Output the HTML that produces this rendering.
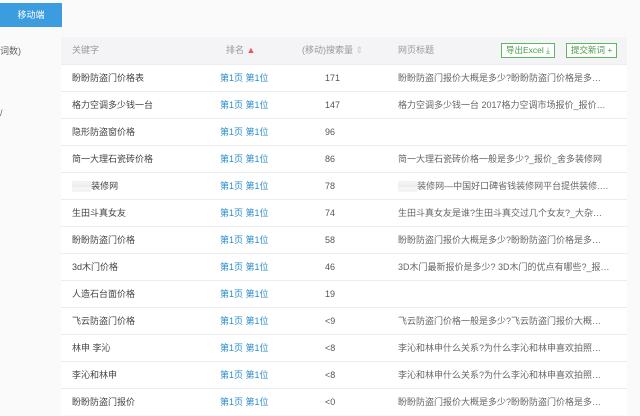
<!DOCTYPE html>
<html><head><meta charset="utf-8"><style>
*{margin:0;padding:0;box-sizing:border-box}
body{width:640px;height:416px;overflow:hidden;background:#fafafb;font-family:"Liberation Sans","Noto Sans CJK SC",sans-serif;font-size:9px;color:#555;position:relative}
.btn{position:absolute;left:0;top:3px;width:62px;height:24px;background:#3b9ce0;color:#fff;font-size:9px;line-height:24px;text-align:center}
.side{position:absolute;left:0;top:44px;font-size:9px;color:#666}
.tbl{position:absolute;left:61px;top:37px;width:566px;background:#fff}
.hd{height:27px;background:#f4f4f6;position:relative;color:#999}
.row{height:27px;border-top:1px solid #ececef;position:relative}
.c{position:absolute;top:0;line-height:27px;white-space:nowrap}
.k{left:11px;color:#444}.r{left:159px;color:#2d8ccc}.n{left:264px;color:#555}.t{left:337px;color:#666;width:212px;overflow:hidden;text-overflow:ellipsis}
.gb{position:absolute;top:6px;height:15px;border:1px solid #5cb85c;color:#4a9a4a;font-size:8.5px;line-height:13px;padding:0 4px;background:#fff}
</style></head><body>
<div class="btn">移动端</div>
<div class="side">词数)</div>
<div class="side" style="top:108px">/</div>
<div class="tbl">
<div class="hd"><span class="c k" style="color:#999">关键字</span><span class="c" style="left:165px">排名 <span style="color:#e55">▲</span></span><span class="c" style="left:241px">(移动)搜索量 <span style="color:#ccc">⇕</span></span><span class="c" style="left:337px">网页标题</span>
<span class="gb" style="left:440px">导出Excel ⤓</span><span class="gb" style="left:505px">提交新词 +</span></div>
<div class="row"><span class="c k">盼盼防盗门价格表</span><span class="c r">第1页 第1位</span><span class="c n">171</span><span class="c t">盼盼防盗门报价大概是多少?盼盼防盗门价格是多少_报价_装修</span></div>
<div class="row"><span class="c k">格力空调多少钱一台</span><span class="c r">第1页 第1位</span><span class="c n">147</span><span class="c t">格力空调多少钱一台 2017格力空调市场报价_报价_音...</span></div>
<div class="row"><span class="c k">隐形防盗窗价格</span><span class="c r">第1页 第1位</span><span class="c n">96</span></div>
<div class="row"><span class="c k">简一大理石瓷砖价格</span><span class="c r">第1页 第1位</span><span class="c n">86</span><span class="c t">简一大理石瓷砖价格一般是多少?_报价_舍多装修网</span></div>
<div class="row"><span class="c k"><span style="color:#ccc">▒▒▒</span>装修网</span><span class="c r">第1页 第1位</span><span class="c n">78</span><span class="c t"><span style="color:#ccc">▒▒▒</span>装修网—中国好口碑省钱装修网平台提供装修...官网</span></div>
<div class="row"><span class="c k">生田斗真女友</span><span class="c r">第1页 第1位</span><span class="c n">74</span><span class="c t">生田斗真女友是谁?生田斗真交过几个女友?_大杂烩_音乐</span></div>
<div class="row"><span class="c k">盼盼防盗门价格</span><span class="c r">第1页 第1位</span><span class="c n">58</span><span class="c t">盼盼防盗门报价大概是多少?盼盼防盗门价格是多少_报价_装修</span></div>
<div class="row"><span class="c k">3d木门价格</span><span class="c r">第1页 第1位</span><span class="c n">46</span><span class="c t">3D木门最新报价是多少? 3D木门的优点有哪些?_报价_音乐</span></div>
<div class="row"><span class="c k">人造石台面价格</span><span class="c r">第1页 第1位</span><span class="c n">19</span></div>
<div class="row"><span class="c k">飞云防盗门价格</span><span class="c r">第1页 第1位</span><span class="c n">&lt;9</span><span class="c t">飞云防盗门价格一般是多少?飞云防盗门报价大概多少钱?装修</span></div>
<div class="row"><span class="c k">林申 李沁</span><span class="c r">第1页 第1位</span><span class="c n">&lt;8</span><span class="c t">李沁和林申什么关系?为什么李沁和林申喜欢拍照片?_大杂烩</span></div>
<div class="row"><span class="c k">李沁和林申</span><span class="c r">第1页 第1位</span><span class="c n">&lt;8</span><span class="c t">李沁和林申什么关系?为什么李沁和林申喜欢拍照片?_大杂烩</span></div>
<div class="row"><span class="c k">盼盼防盗门报价</span><span class="c r">第1页 第1位</span><span class="c n">&lt;0</span><span class="c t">盼盼防盗门报价大概是多少?盼盼防盗门价格是多少_报价_装修</span></div>
</div>
</body></html>
